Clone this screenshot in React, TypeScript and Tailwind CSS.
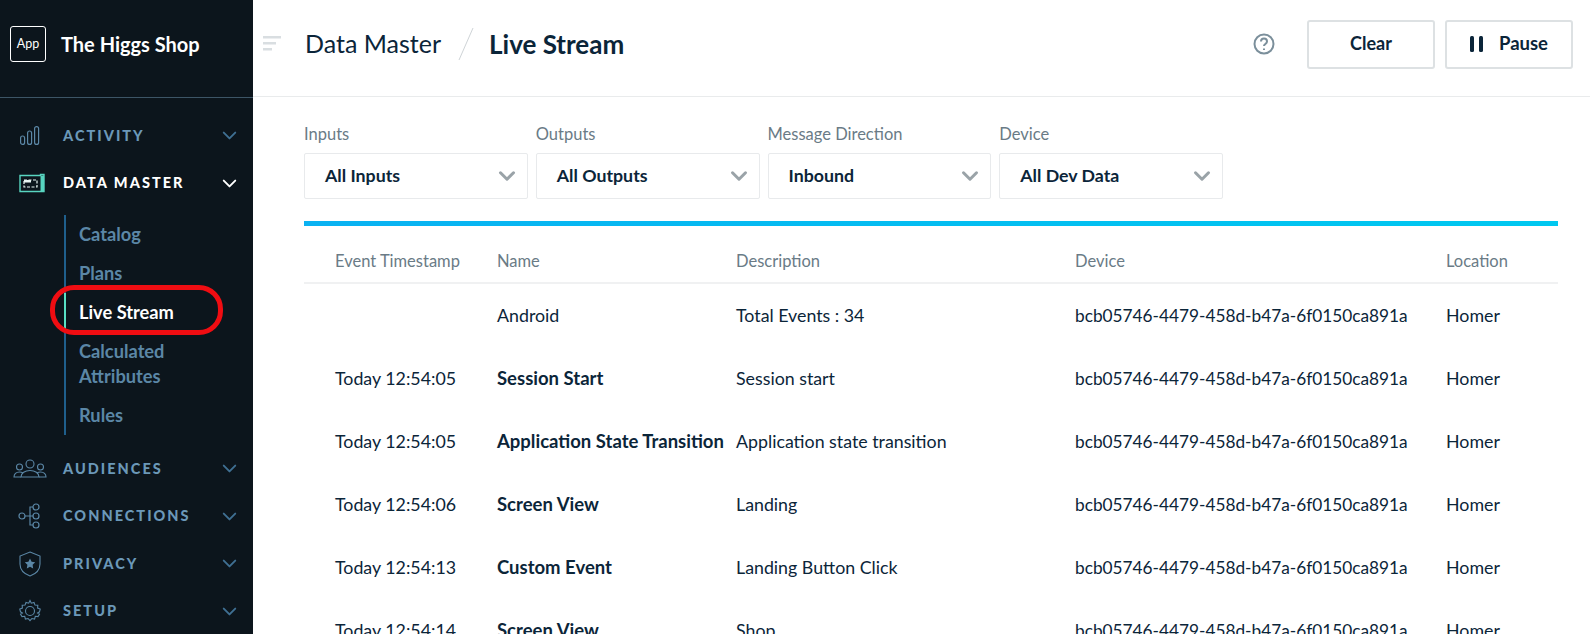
import { ChevronDown } from 'lucide-react'
import type { ReactNode } from 'react'

const ink = 'text-[#0b2539]'

const rows = [
  { time: '', name: 'Android', desc: 'Total Events : 34', plain: true },
  { time: 'Today 12:54:05', name: 'Session Start', desc: 'Session start' },
  { time: 'Today 12:54:05', name: 'Application State Transition', desc: 'Application state transition' },
  { time: 'Today 12:54:06', name: 'Screen View', desc: 'Landing' },
  { time: 'Today 12:54:13', name: 'Custom Event', desc: 'Landing Button Click' },
  { time: 'Today 12:54:14', name: 'Screen View', desc: 'Shop' },
]

const ActivityIcon = () => (
  <svg width="20" height="19" viewBox="0 0 20 19" fill="none" stroke="#5b87a6" strokeWidth="1.2">
    <rect x="0.6" y="10" width="4" height="8.4" rx="2" />
    <rect x="7.6" y="5" width="4" height="13.4" rx="2" />
    <rect x="14.6" y="0.6" width="4" height="17.8" rx="2" />
  </svg>
)

const DataIcon = () => (
  <svg width="26" height="20" viewBox="0 0 26 20" fill="none" className="ml-[5px]">
    <path d="M1 2.5h20.5V1.5h3.5v17H1z" fill="#0c151c" stroke="#58d5c0" strokeWidth="1.4" />
    <path d="M21.5 2.5h3.5v16h-3.500z" fill="#58d5c0" />
    <path d="M5 7h13v7H5z" stroke="#e8f4f2" strokeWidth="1.2" strokeDasharray="3 1.5" />
    <path d="M5 7h7v2.500H5z" fill="#e8f4f2" />
  </svg>
)

const AudienceIcon = () => (
  <svg width="34" height="20" viewBox="0 0 34 20" fill="none" stroke="#5b87a6" strokeWidth="1.1">
    <circle cx="17" cy="5" r="4" />
    <circle cx="6.5" cy="8" r="3" />
    <circle cx="27.5" cy="8" r="3" />
    <path d="M8 18c0-4 4-6.500 9-6.500s9 2.500 9 6.500z" />
    <path d="M8 18H1c0-3 2-5 5.500-5 1.500 0 2.500.3 3.500 1" />
    <path d="M26 18h7c0-3-2-5-5.500-5-1.500 0-2.500.3-3.500 1" />
  </svg>
)

const ConnectionIcon = () => (
  <svg width="24" height="26" viewBox="0 0 24 26" fill="none" stroke="#5b87a6" strokeWidth="1.2">
    <circle cx="4" cy="13" r="3" />
    <circle cx="18" cy="4" r="3" />
    <circle cx="18" cy="13" r="3" />
    <circle cx="18" cy="22" r="3" />
    <path d="M7 13h8M15 4h-3v18h3" />
  </svg>
)

const PrivacyIcon = () => (
  <svg width="22" height="26" viewBox="0 0 22 26" fill="none">
    <path d="M11 1l10 4v8c0 6-4.500 10-10 12C5.500 23 1 19 1 13V5z" stroke="#5b87a6" strokeWidth="1.1" />
    <path d="M11 7.500l1.600 3.300 3.600.5-2.600 2.500.6 3.600-3.200-1.700-3.200 1.700.6-3.600-2.600-2.500 3.600-.5z" fill="#5b87a6" />
  </svg>
)

const SetupIcon = () => (
  <svg width="24" height="24" viewBox="0 0 24 24" fill="none" stroke="#5b87a6" strokeWidth="1.100">
    <circle cx="12" cy="12" r="4.500" />
    <path d="M12 1.500l1.300 2.700 2.700-.7 1 2.600 2.800.2-.2 2.800 2.600 1-.7 2.700-1.900 1.200 1.900 1.200-1.500 2.400-2.700-.3-.7 2.700-2.700-.5-1.900 2.100-1.900-2.100-2.700.5-.7-2.700-2.700.3-1.500-2.400 1.900-1.200-1.900-1.200-.7-2.700 2.600-1-.2-2.800 2.800-.2 1-2.600 2.700.7z" />
  </svg>
)

const NavRow = ({ icon, label, active }: { icon: ReactNode; label: string; active?: boolean }) => (
  <div className="flex h-[47.500px] items-center">
    <div className="mr-[4px] flex w-[59px] shrink-0 justify-center">{icon}</div>
    <span className={`flex-1 text-[14.500px] font-black tracking-[0.14em] ${active ? 'text-white' : 'text-[#6b98b8]'}`}>{label}</span>
    <ChevronDown size={23} strokeWidth={2} className={`mr-[12px] ${active ? 'text-white' : 'text-[#3f6f92]'}`} />
  </div>
)

const SubItem = ({ children, active }: { children: ReactNode; active?: boolean }) => (
  <div className={`border-l-[2px] pl-[13px] py-[7px] text-[18.250px] leading-[25px] font-bold ${active ? 'border-[#58e0c4] text-white' : 'border-[#1f5f8c] text-[#5b87a6]'}`}>
    {children}
  </div>
)

const Select = ({ label, value }: { label: string; value: string }) => (
  <div className="w-[223.750px]">
    <div className="mb-[9px] text-[16.500px] leading-[20px] text-[#6a7b86]">{label}</div>
    <div className={`flex h-[46px] items-center justify-between rounded-[2px] border border-[#e8eaec] pl-[20px] pr-[7px] text-[17.750px] font-bold ${ink}`}>
      <span className="pb-[2px]">{value}</span>
      <ChevronDown size={26} strokeWidth={2.800} className="text-[#9aa3a8]" />
    </div>
  </div>
)

export default function App() {
  return (
    <div className={`relative flex h-[634px] w-[1590px] overflow-hidden bg-white font-['Lato',sans-serif] ${ink}`}>
      <aside className="w-[253px] shrink-0 bg-[#0c151c]">
        <div className="flex h-[98px] items-center gap-[15px] border-b border-[#3d5566] pl-[10px] pb-[9px]">
          <div className="flex h-[36px] w-[36px] items-center justify-center rounded-[3px] border border-white text-[12.500px] text-white">App</div>
          <span className="text-[20px] font-bold text-white">The Higgs Shop</span>
        </div>
        <nav className="pt-[14px]">
          <NavRow icon={<ActivityIcon />} label="ACTIVITY" />
          <NavRow active icon={<DataIcon />} label="DATA MASTER" />
          <div className="ml-[64px] mr-[20px] mt-[8px] mb-[10px]">
            <SubItem>Catalog</SubItem>
            <SubItem>Plans</SubItem>
            <SubItem active>Live Stream</SubItem>
            <SubItem>Calculated Attributes</SubItem>
            <SubItem>Rules</SubItem>
          </div>
          <NavRow icon={<AudienceIcon />} label="AUDIENCES" />
          <NavRow icon={<ConnectionIcon />} label="CONNECTIONS" />
          <NavRow icon={<PrivacyIcon />} label="PRIVACY" />
          <NavRow icon={<SetupIcon />} label="SETUP" />
        </nav>
      </aside>

      <main className="min-w-0 flex-1">
        <header className="flex h-[97px] items-center border-b border-[#e9ebec] pr-[17px] pb-[8px]">
          <svg width="18" height="16" viewBox="0 0 18 16" className="ml-[10px] mr-[24px]" fill="#d9dee1">
            <rect width="18" height="2.500" />
            <rect y="6" width="13" height="2.500" />
            <rect y="12" width="9" height="2.500" />
          </svg>
          <span className="text-[25px]">Data Master</span>
          <svg width="16" height="34" viewBox="0 0 16 34" className="ml-[17px] mr-[15px]" stroke="#cfd4d7" fill="none">
            <path d="M15 1L1 33" />
          </svg>
          <span className="text-[26px] font-bold">Live Stream</span>
          <svg width="22" height="22" viewBox="0 0 22 22" className="ml-auto mr-[32px]" fill="none" stroke="#7b8f9b" strokeWidth="2">
            <circle cx="11" cy="11" r="9.500" />
            <path d="M8 8.500c0-4 6-4 6 0 0 2.500-3 2.500-3 4.500" />
            <path d="M11 15.500v1.500" />
          </svg>
          <button className="h-[49px] w-[128px] rounded-[3px] border-2 border-[#dde1e3] pb-[2px] text-[18px] font-bold">Clear</button>
          <button className="ml-[10px] flex h-[49px] w-[128px] items-center justify-center gap-[15px] rounded-[3px] border-2 border-[#dde1e3] text-[18.500px] font-bold">
            <svg width="14" height="16" viewBox="0 0 14 16" fill="#0b2539">
              <rect x="0" width="4" height="16" rx="1.500" />
              <rect x="9" width="4" height="16" rx="1.500" />
            </svg>
            Pause
          </button>
        </header>

        <div className="pl-[51px] pr-[32px]">
          <div className="flex gap-[8px] pt-[27px]">
            <Select label="Inputs" value="All Inputs" />
            <Select label="Outputs" value="All Outputs" />
            <Select label="Message Direction" value="Inbound" />
            <Select label="Device" value="All Dev Data" />
          </div>
          <div className="mt-[22px] h-[5px] bg-gradient-to-r from-[#0ab2f2] to-[#00c8f0]" />

          <div className="flex h-[58px] items-center border-b-2 border-[#f0f1f2] pt-[14px] text-[16.500px] text-[#6a7b86]">
            <span className="w-[193px] pl-[31px]">Event Timestamp</span>
            <span className="w-[239px]">Name</span>
            <span className="w-[339px]">Description</span>
            <span className="w-[371px]">Device</span>
            <span>Location</span>
          </div>
          {rows.map((row, i) => (
            <div key={i} className="flex h-[63px] items-center text-[17.800px]">
              <span className="w-[193px] pl-[31px]">{row.time}</span>
              <span className={`w-[239px] whitespace-nowrap ${row.plain ? '' : 'text-[18.500px] font-bold'}`}>{row.name}</span>
              <span className="w-[339px]">{row.desc}</span>
              <span className="w-[371px] text-[17.250px]">bcb05746-4479-458d-b47a-6f0150ca891a</span>
              <span>Homer</span>
            </div>
          ))}
        </div>
      </main>

      <div className="absolute left-[50px] top-[285px] h-[50px] w-[173px] rounded-[24px] border-[5px] border-[#f00d12]" />
    </div>
  )
}
